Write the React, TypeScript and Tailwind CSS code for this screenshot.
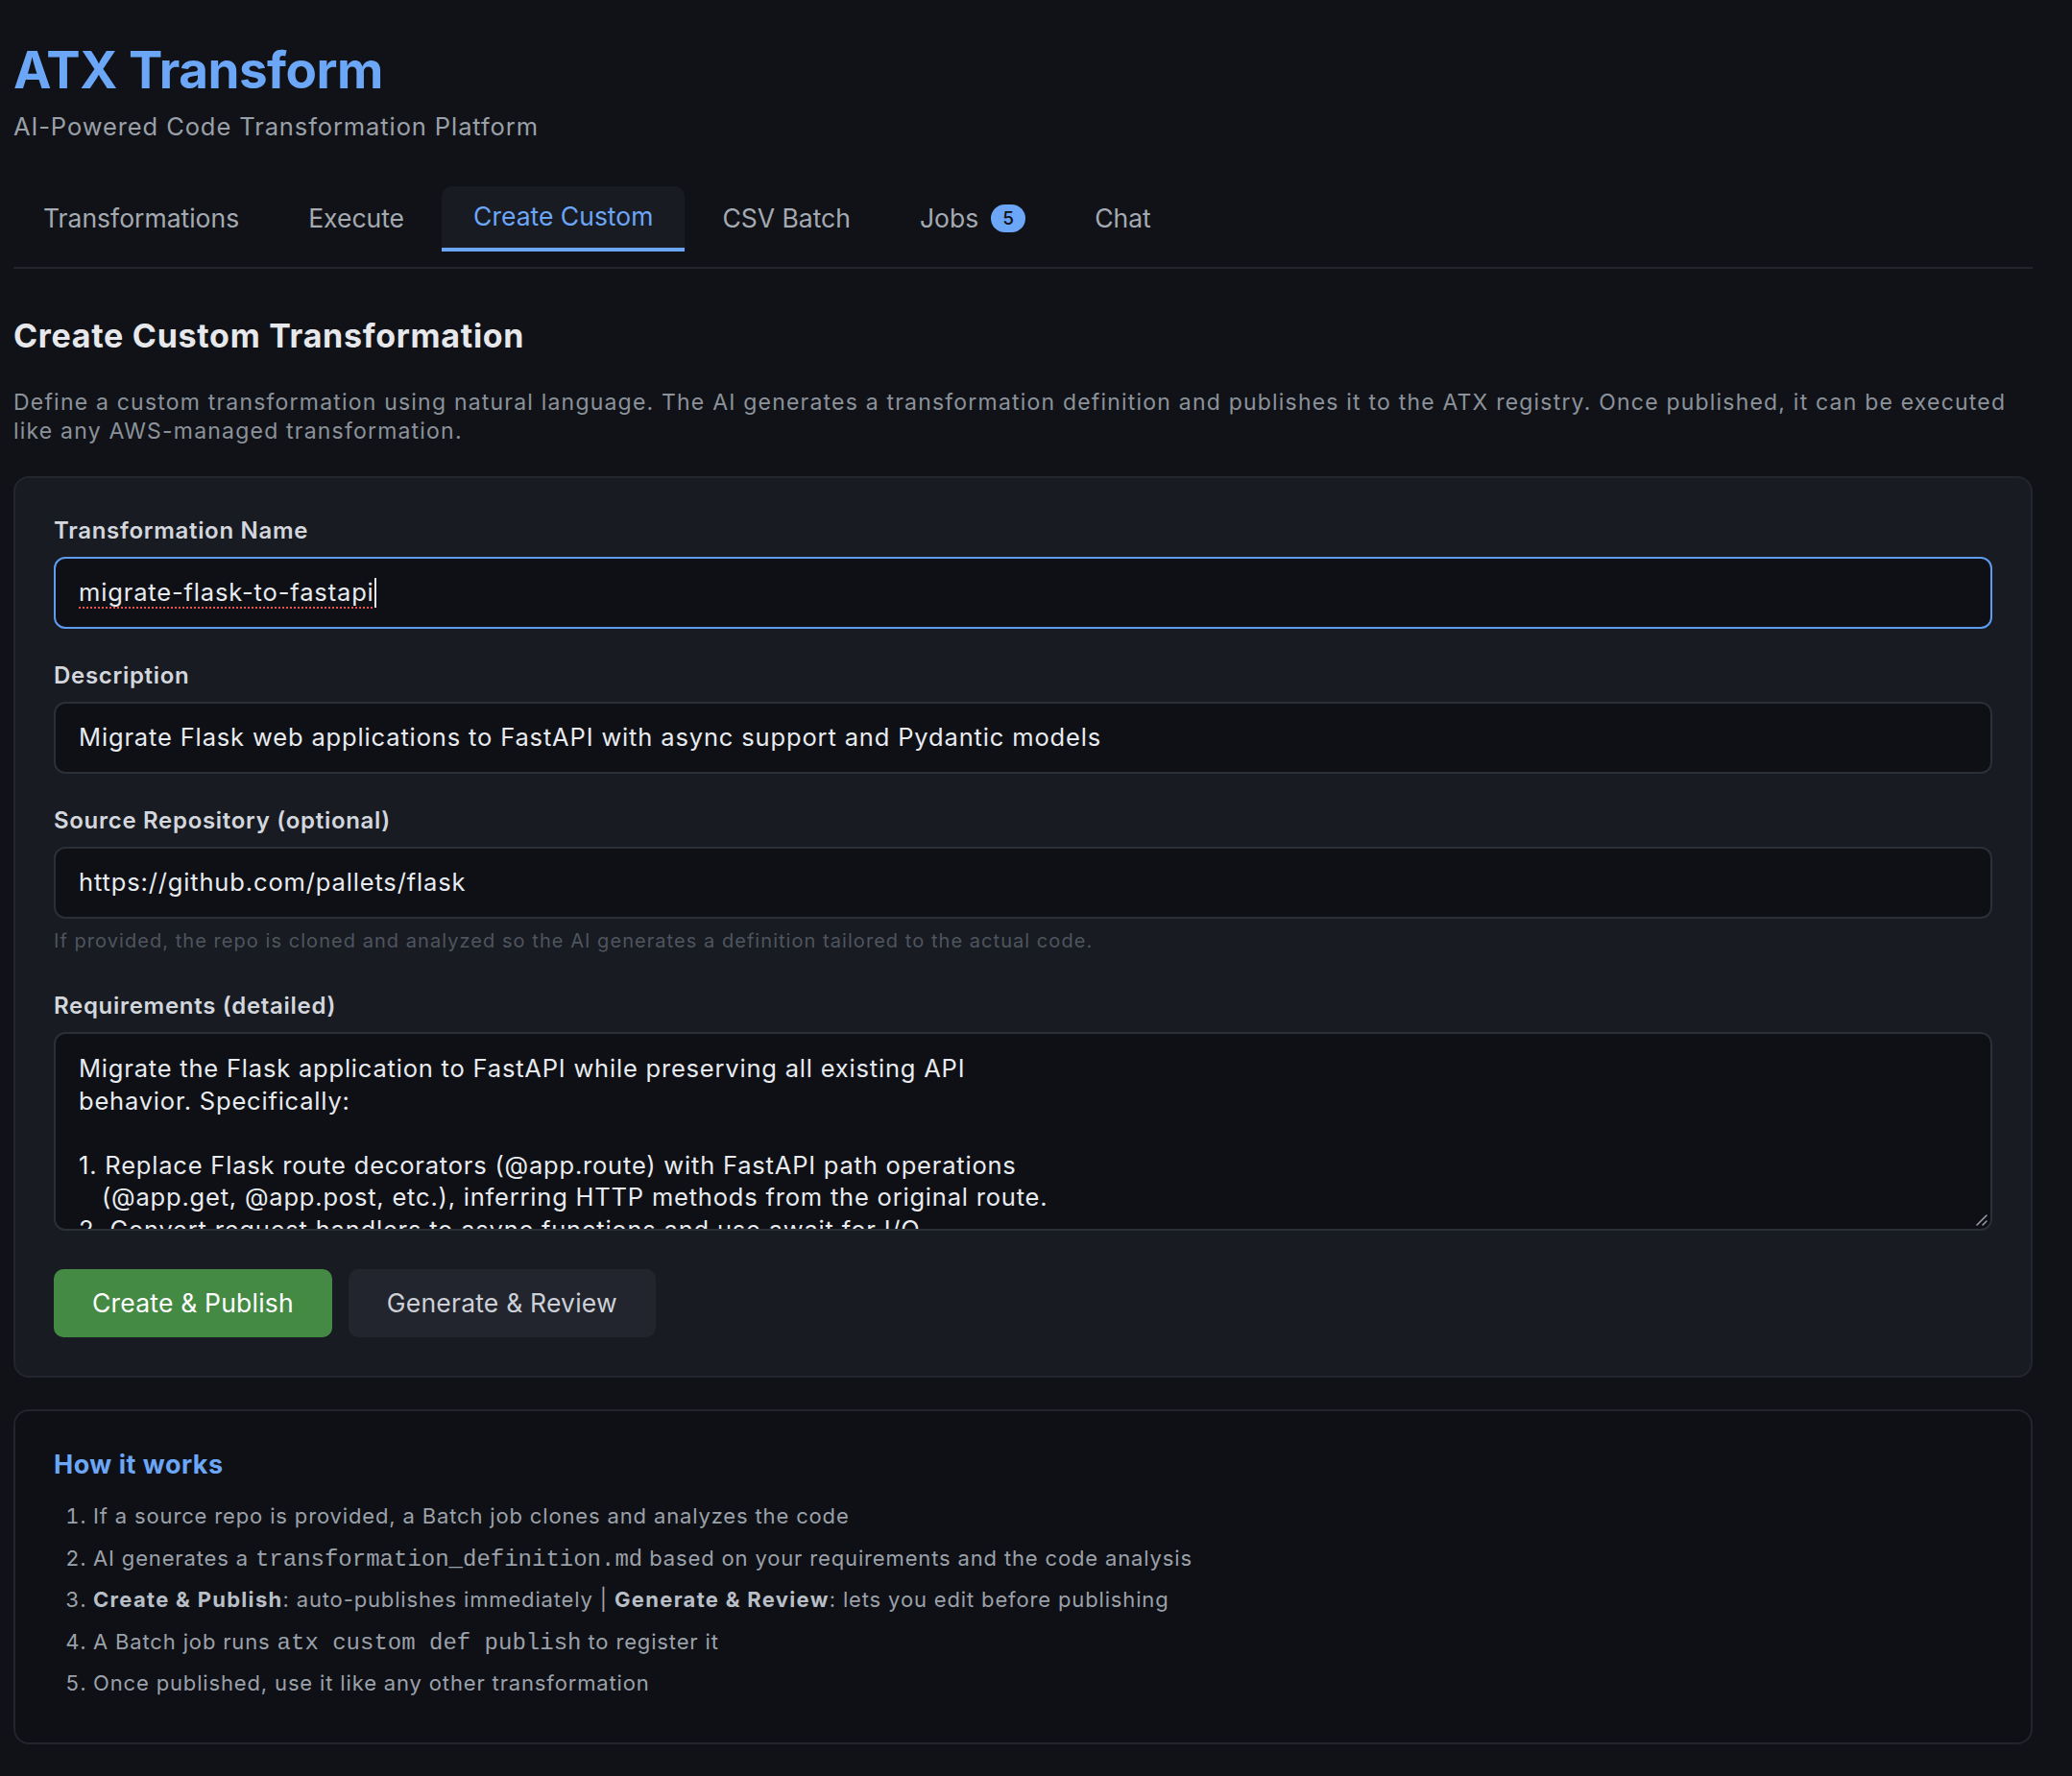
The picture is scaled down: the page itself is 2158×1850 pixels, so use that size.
import React from "react";

const tabs = [
  { label: "Transformations" },
  { label: "Execute" },
  { label: "Create Custom", active: true },
  { label: "CSV Batch" },
  { label: "Jobs", badge: "5" },
  { label: "Chat" },
];

const reqText = `Migrate the Flask application to FastAPI while preserving all existing API
behavior. Specifically:

1. Replace Flask route decorators (@app.route) with FastAPI path operations
   (@app.get, @app.post, etc.), inferring HTTP methods from the original route.
2. Convert request handlers to async functions and use await for I/O.
3. Replace request parsing with Pydantic models for bodies and query params.
4. Keep the same URL structure and response formats.`;

function Label({ children }: { children: React.ReactNode }) {
  return (
    <div className="text-[24px] leading-[30px] font-semibold tracking-[0.7px] text-[#d3d7dd] mb-[12px]">
      {children}
    </div>
  );
}

function Field({ value }: { value: string }) {
  return (
    <div className="h-[75px] rounded-[12px] border-2 border-[#2b2f37] bg-[#0e1015] flex items-center px-[24px] text-[25.5px] tracking-[0.85px] text-[#e8ebef]">
      {value}
    </div>
  );
}

export default function App() {
  return (
    <div className="min-h-[1850px] bg-[#111217] font-['Inter',sans-serif] pl-[14px] pr-[41px] pt-[40px] pb-[33px]">
      <h1 className="text-[53px] leading-[66px] font-bold text-[#6ca6f7] tracking-[-0.5px]">ATX Transform</h1>
      <p className="mt-[7px] text-[25.5px] leading-[37px] tracking-[0.9px] text-[#9aa0a8]">AI-Powered Code Transformation Platform</p>

      <nav className="mt-[44px] flex gap-[6px] pb-[16px] border-b-2 border-[#22252c]">
        {tabs.map((t, i) => (
          <div
            key={t.label}
            className={
              (i === 0 ? "-ml-[2px] " : "") +
              (t.active
                ? "flex items-center px-[33px] pt-[12px] pb-[13px] border-b-4 border-[#6ca6f7] bg-[#181b22] rounded-t-[11px] text-[26.5px] leading-[39px] text-[#6ca6f7]"
                : "flex items-center px-[33px] pt-[14px] pb-[11px] border-b-4 border-transparent text-[26.5px] leading-[39px] text-[#a4aab2]")
            }
          >
            <span>{t.label}</span>
            {t.badge && (
              <span className="ml-[13px] w-[36px] h-[29px] rounded-full bg-[#6ca6f7] text-[#111217] text-[19px] font-medium flex items-center justify-center">
                {t.badge}
              </span>
            )}
          </div>
        ))}
      </nav>

      <h2 className="mt-[50px] text-[34px] leading-[40px] font-bold tracking-[0.7px] text-[#e6e8eb]">Create Custom Transformation</h2>
      <p className="mt-[34px] text-[23px] leading-[30px] tracking-[1.2px] text-[#8b929b]">
        Define a custom transformation using natural language. The AI generates a transformation definition and publishes it to the ATX registry. Once published, it can be executed
        <br />
        like any AWS-managed transformation.
      </p>

      <div className="mt-[32px] rounded-[16px] border-2 border-[#23262e] bg-[#181b22] p-[40px]">
        <Label>Transformation Name</Label>
        <div className="h-[75px] rounded-[12px] border-2 border-[#5d9cef] bg-[#0e1015] flex items-center px-[24px] text-[25.5px] tracking-[0.85px] text-[#e8ebef]">
          <span className="underline decoration-dotted decoration-[#e5534b] decoration-2 underline-offset-[6px]">migrate-flask-to-fastapi</span>
          <span className="w-[2px] h-[31px] bg-[#e8ebef]" />
        </div>

        <div className="mt-[34px]">
          <Label>Description</Label>
          <Field value="Migrate Flask web applications to FastAPI with async support and Pydantic models" />
        </div>

        <div className="mt-[34px]">
          <Label>Source Repository (optional)</Label>
          <Field value="https://github.com/pallets/flask" />
          <div className="mt-[10px] text-[20px] leading-[27px] tracking-[1.05px] text-[#4f555e]">
            If provided, the repo is cloned and analyzed so the AI generates a definition tailored to the actual code.
          </div>
        </div>

        <div className="mt-[39px]">
          <Label>Requirements (detailed)</Label>
          <div className="relative h-[207px] rounded-[12px] border-2 border-[#2b2f37] bg-[#0e1015] overflow-hidden">
            <div className="px-[24px] pt-[19px] whitespace-pre-wrap text-[25.5px] leading-[33.6px] tracking-[0.8px] text-[#e8ebef]">{reqText}</div>
            <svg className="absolute right-[3px] bottom-[3px]" width="14" height="14" viewBox="0 0 14 14">
              <path d="M13 3 L3 13 M13 9 L9 13" stroke="#9aa0a8" strokeWidth="1.5" strokeLinecap="round" />
            </svg>
          </div>
        </div>

        <div className="mt-[40px] flex gap-[17px]">
          <button className="h-[71px] px-[40px] rounded-[10px] bg-[#448a44] text-white text-[26.5px] tracking-[0.2px]">Create &amp; Publish</button>
          <button className="h-[71px] px-[40px] rounded-[10px] bg-[#22252d] text-[#cdd1d7] text-[26.5px] tracking-[0.2px]">Generate &amp; Review</button>
        </div>
      </div>

      <div className="mt-[33px] rounded-[16px] border-2 border-[#22252c] bg-[#0e1015] px-[40px] pt-[40px] pb-[47px]">
        <h3 className="text-[27px] leading-[31px] font-bold tracking-[0.5px] text-[#6ca6f7]">How it works</h3>
        <ol className="mt-[23px] list-decimal pl-[41px] text-[22px] leading-[30px] tracking-[0.85px] text-[#9ba1aa] flex flex-col gap-[13.5px]">
          <li>If a source repo is provided, a Batch job clones and analyzes the code</li>
          <li>
            AI generates a <code className="font-['Liberation_Mono',monospace] text-[24px] tracking-normal leading-none">transformation_definition.md</code> based on your requirements and the code analysis
          </li>
          <li>
            <b className="font-bold tracking-[1.3px] text-[#b9bfc7]">Create &amp; Publish</b>: auto-publishes immediately | <b className="font-bold tracking-[1.3px] text-[#b9bfc7]">Generate &amp; Review</b>: lets you edit before publishing
          </li>
          <li>
            A Batch job runs <code className="font-['Liberation_Mono',monospace] text-[24px] tracking-normal leading-none">atx custom def publish</code> to register it
          </li>
          <li>Once published, use it like any other transformation</li>
        </ol>
      </div>
    </div>
  );
}
